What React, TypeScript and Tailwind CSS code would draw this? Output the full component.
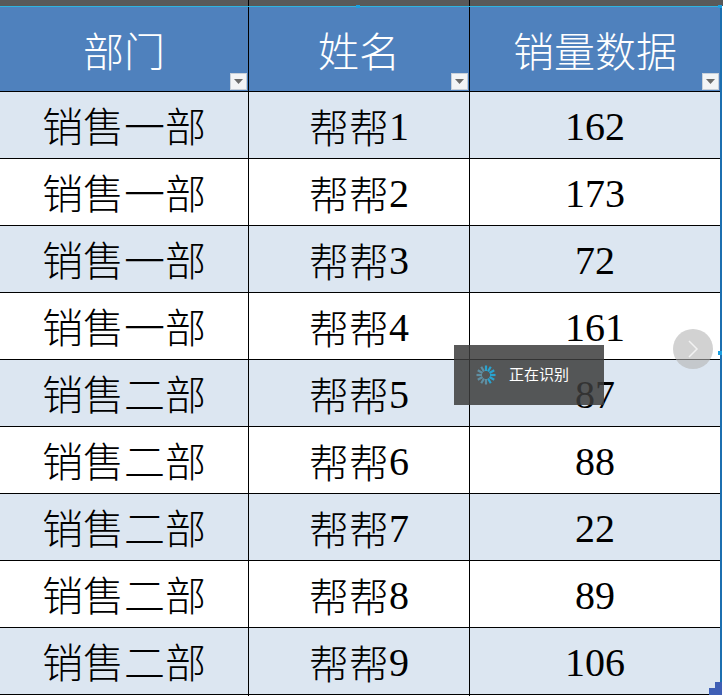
const rows = [
  ["销售一部", "1", "162"],
  ["销售一部", "2", "173"],
  ["销售一部", "3", "72"],
  ["销售一部", "4", "161"],
  ["销售二部", "5", "87"],
  ["销售二部", "6", "88"],
  ["销售二部", "7", "22"],
  ["销售二部", "8", "89"],
  ["销售二部", "9", "106"],
];

function FilterButton() {
  return (
    <span className="absolute right-[1px] bottom-[1px] flex h-[17px] w-[17px] items-center justify-center border border-[#c8d0da] bg-[#f3f4f6]">
      <svg width="9" height="5" viewBox="0 0 9 5">
        <path d="M0 0h9L4.5 5z" fill="#6b6b6b" />
      </svg>
    </span>
  );
}

function Spinner() {
  const spokes = [0, 30, 60, 90, 120, 150, 180, 210, 240, 270, 300, 330];
  return (
    <svg width="20" height="20" viewBox="0 0 20 20">
      {spokes.map((a, i) => (
        <rect
          key={a}
          x="8.9"
          y="0.5"
          width="2.2"
          height="5.5"
          fill={i < 6 ? "#2aa3cf" : "#5f8fa3"}
          transform={`rotate(${a} 10 10)`}
        />
      ))}
    </svg>
  );
}

export default function App() {
  return (
    <div className="relative h-[696px] w-[723px] overflow-hidden bg-white font-['Liberation_Serif','Noto_Sans_CJK_SC',serif] text-[40px] font-light text-black">
      <div className="flex h-[6px] bg-[#595959]">
        <div className="h-full w-[248px] border-r border-black box-content" />
        <div className="h-full w-[220px] border-r border-black box-content" />
      </div>
      <div className="h-px w-[722px] bg-[#2fb4e0]" />

      <div className="w-[722px] border-r-2 border-[#1c6fb0]">
        <div className="grid h-[85px] grid-cols-[249px_221px_1fr] border-b border-black bg-[#4f81bd] text-[41px] text-white">
          {["部门", "姓名", "销量数据"].map((h, i) => (
            <div
              key={h}
              className={`relative flex items-center justify-center pt-[9px] ${i < 2 ? "border-r border-black" : ""}`}
            >
              {h}
              <FilterButton />
            </div>
          ))}
        </div>

        {rows.map((r, i) => (
          <div
            key={r[1]}
            className={`grid h-[67px] grid-cols-[249px_221px_1fr] border-b border-black ${i % 2 === 0 ? "bg-[#dce6f1]" : "bg-white"}`}
          >
            <div className="flex items-center justify-center border-r border-black pt-[6px] text-[41px]">{r[0]}</div>
            <div className="flex items-center justify-center border-r border-black pt-[5px]">
              <span>
                帮帮<span className="align-[3px]">{r[1]}</span>
              </span>
            </div>
            <div className="flex items-center justify-center pt-[1px]">{r[2]}</div>
          </div>
        ))}
      </div>

      {/* recognising toast */}
      <div className="absolute left-[454px] top-[345px] flex h-[60px] w-[150px] items-center bg-[#3c3c3c]/85 pl-[22px] font-['Noto_Sans_CJK_SC',sans-serif] text-[15px] font-normal text-white">
        <Spinner />
        <span className="ml-[13px] -translate-y-px">正在识别</span>
      </div>

      {/* next arrow */}
      <div className="absolute left-[673px] top-[329px] flex h-[40px] w-[40px] items-center justify-center rounded-full bg-[#b4b4b4]/60">
        <svg width="12" height="20" viewBox="0 0 12 20" fill="none" stroke="#f2f2f2" strokeWidth="1.5">
          <path d="M2 2l8 8-8 8" />
        </svg>
      </div>

      {/* selection handles */}
      <div className="absolute left-[356px] top-[5px] h-[3px] w-[4px] bg-[#1c9fe0]" />
      <div className="absolute left-[718px] top-[5px] h-[3px] w-[4px] bg-[#1c9fe0]" />
      <div className="absolute left-[718px] top-[351px] h-[4px] w-[4px] bg-[#1c9fe0]" />
      <div className="absolute left-[709px] top-[688px] h-[7px] w-[13px] bg-[#3f5fb5]" />
      <div className="absolute left-[715px] top-[682px] h-[6px] w-[7px] bg-[#3f5fb5]" />
    </div>
  );
}
